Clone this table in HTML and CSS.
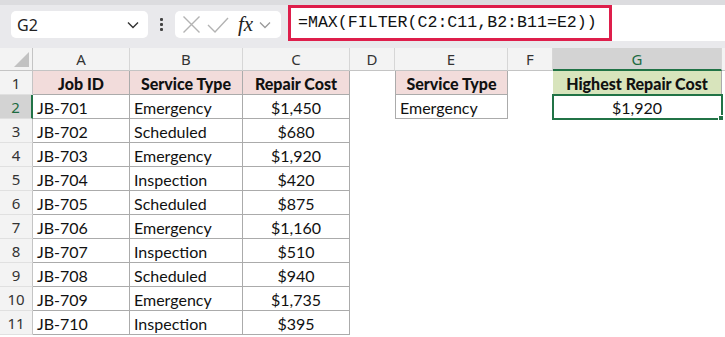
FILE: index.html
```html
<!DOCTYPE html>
<html>
<head>
<meta charset="utf-8">
<link rel="stylesheet" href="styles.css">
</head>
<body>
<div class="topband"></div>
<div class="fbar">
  <div class="namebox">
    <span class="nb-text">G2</span>
    <svg class="nb-chev" width="12" height="8" viewBox="0 0 12 8"><path d="M1 1.5 L6 6.5 L11 1.5" fill="none" stroke="#333" stroke-width="1.4"/></svg>
  </div>
  <div class="dots"><span></span><span></span><span></span></div>
  <div class="fxbox">
    <svg width="19" height="19" viewBox="0 0 19 19"><path d="M1.5 1.5 L17.5 17.5 M17.5 1.5 L1.5 17.5" fill="none" stroke="#b3b3b3" stroke-width="1.4"/></svg>
    <svg width="22" height="18" viewBox="0 0 22 18"><path d="M1 9 L8 16 L21 2" fill="none" stroke="#b3b3b3" stroke-width="1.4"/></svg>
    <span class="fx">fx</span>
    <svg width="12" height="8" viewBox="0 0 12 8"><path d="M1 1.5 L6 6.5 L11 1.5" fill="none" stroke="#9a9a9a" stroke-width="1.3"/></svg>
  </div>
  <div class="formula">
    <div class="hl">=MAX(FILTER(C2:C11,B2:B11=E2))</div>
  </div>
</div>
<div class="sheet">
  <div class="ch corner"><span class="tri"></span></div>
  <div class="ch">A</div><div class="ch">B</div><div class="ch">C</div><div class="ch">D</div><div class="ch">E</div><div class="ch">F</div><div class="ch sel">G</div><div class="ch last"></div>

  <div class="rh">1</div>
  <div class="c t hd">Job ID</div><div class="c t hd">Service Type</div><div class="c t hd">Repair Cost</div>
  <div class="c"></div><div class="c t hd bl">Service Type</div><div class="c"></div><div class="c t hg">Highest Repair Cost</div><div class="c"></div>

  <div class="rh rsel">2</div>
  <div class="c t">JB-701</div><div class="c t">Emergency</div><div class="c t ctr">$1,450</div>
  <div class="c"></div><div class="c t bl">Emergency</div><div class="c"></div><div class="c t ctr active">$1,920<span class="handle"></span></div><div class="c"></div>

  <div class="rh">3</div>
  <div class="c t">JB-702</div><div class="c t">Scheduled</div><div class="c t ctr">$680</div><div class="c wide"></div>
  <div class="rh">4</div>
  <div class="c t">JB-703</div><div class="c t">Emergency</div><div class="c t ctr">$1,920</div><div class="c wide"></div>
  <div class="rh">5</div>
  <div class="c t">JB-704</div><div class="c t">Inspection</div><div class="c t ctr">$420</div><div class="c wide"></div>
  <div class="rh">6</div>
  <div class="c t">JB-705</div><div class="c t">Scheduled</div><div class="c t ctr">$875</div><div class="c wide"></div>
  <div class="rh">7</div>
  <div class="c t">JB-706</div><div class="c t">Emergency</div><div class="c t ctr">$1,160</div><div class="c wide"></div>
  <div class="rh">8</div>
  <div class="c t">JB-707</div><div class="c t">Inspection</div><div class="c t ctr">$510</div><div class="c wide"></div>
  <div class="rh">9</div>
  <div class="c t">JB-708</div><div class="c t">Scheduled</div><div class="c t ctr">$940</div><div class="c wide"></div>
  <div class="rh">10</div>
  <div class="c t">JB-709</div><div class="c t">Emergency</div><div class="c t ctr">$1,735</div><div class="c wide"></div>
  <div class="rh">11</div>
  <div class="c t">JB-710</div><div class="c t">Inspection</div><div class="c t ctr">$395</div><div class="c wide"></div>
</div>
</body>
</html>
```
FILE: styles.css
```css
* { box-sizing: border-box; }
html, body { margin: 0; padding: 0; background: #fff; overflow: hidden; }
body { width: 725px; height: 337px; font-family: Lato, "Liberation Sans", sans-serif; }

.topband { height: 5px; background: #dcdcdf; }
.fbar {
  height: 43px;
  background: #e9e9ec;
  display: flex;
  align-items: flex-start;
}
.namebox {
  margin: 6px 0 0 11px;
  width: 137px;
  height: 27px;
  background: #fff;
  border-radius: 5px;
  display: flex;
  align-items: center;
  justify-content: space-between;
  padding: 0 9px 0 6px;
}
.nb-text { font-family: "Noto Sans", sans-serif; font-size: 16px; color: #222; }
.dots {
  width: 27px;
  height: 27px;
  margin-top: 6px;
  display: flex;
  flex-direction: column;
  align-items: center;
  justify-content: center;
  gap: 2px;
}
.dots span { width: 3px; height: 3px; background: #444; border-radius: 1px; }
.fxbox {
  margin-top: 6px;
  width: 106px;
  height: 27px;
  background: #fff;
  border-radius: 5px;
  display: flex;
  align-items: center;
  padding: 0 3px 0 7px;
  gap: 6px;
}
.fx {
  font-family: "Liberation Serif", serif;
  font-style: italic;
  font-size: 21px;
  color: #222;
  margin-left: 3px;
  margin-right: 0;
  line-height: 1;
}
.formula {
  margin-left: 7px;
  flex: 1;
  height: 36px;
  background: #fff;
  display: flex;
}
.hl {
  width: 324px;
  height: 36px;
  border: 3px solid #de1e4b;
  font-family: "Liberation Mono", monospace;
  font-size: 16.6px;
  color: #111;
  line-height: 30px;
  padding-left: 7px;
  letter-spacing: 0;
}

.sheet {
  display: grid;
  grid-template-columns: 33px 97px 113px 107px 45px 113px 45px 169px 1fr;
  grid-template-rows: 23px repeat(11, 24px);
  font-size: 16px;
  color: #111;
}
.ch {
  background: #f3f3f3;
  border-bottom: 1px solid #c4c4c4;
  border-right: 1px solid #d6d6d6;
  display: flex;
  align-items: center;
  justify-content: center;
  font-family: "Noto Sans", sans-serif;
  font-size: 15px;
  color: #333;
}
.ch.last { border-right: none; }
.corner { position: relative; border-right: 1px solid #c4c4c4; }
.tri {
  position: absolute;
  right: 3px;
  bottom: 3px;
  width: 0;
  height: 0;
  border-left: 15px solid transparent;
  border-bottom: 15px solid #c2c2c2;
}
.ch.sel {
  background: #d3d3d3;
  color: #1d6b41;
  border-bottom: 2px solid #217346;
}
.rh {
  background: #f3f3f3;
  border-right: 1px solid #c4c4c4;
  border-bottom: 1px solid #e0e0e0;
  display: flex;
  align-items: center;
  justify-content: center;
  font-family: "Noto Sans", sans-serif;
  font-size: 15px;
  color: #333;
  padding-top: 1px;
}
.rh.rsel {
  background: #d3d3d3;
  color: #1d6b41;
  border-right: 2px solid #217346;
}
.c {
  display: flex;
  align-items: center;
  padding: 2px 4px 0;
  white-space: nowrap;
}
.c.wide { grid-column: 5 / 10; }
.t {
  border-right: 1px solid #ababab;
  border-bottom: 1px solid #ababab;
}
.bl { border-left: 1px solid #ababab; }
.hd { background: #f2dcdb; font-weight: 900; justify-content: center; }
.hg { background: #d8e4bc; font-weight: 900; justify-content: center; }
.ctr { justify-content: center; }
.active {
  position: relative;
  outline: 2px solid #217346;
  outline-offset: -1px;
}
.handle {
  position: absolute;
  right: -3px;
  bottom: -3px;
  width: 6px;
  height: 6px;
  background: #217346;
  border: 1px solid #fff;
}
```
